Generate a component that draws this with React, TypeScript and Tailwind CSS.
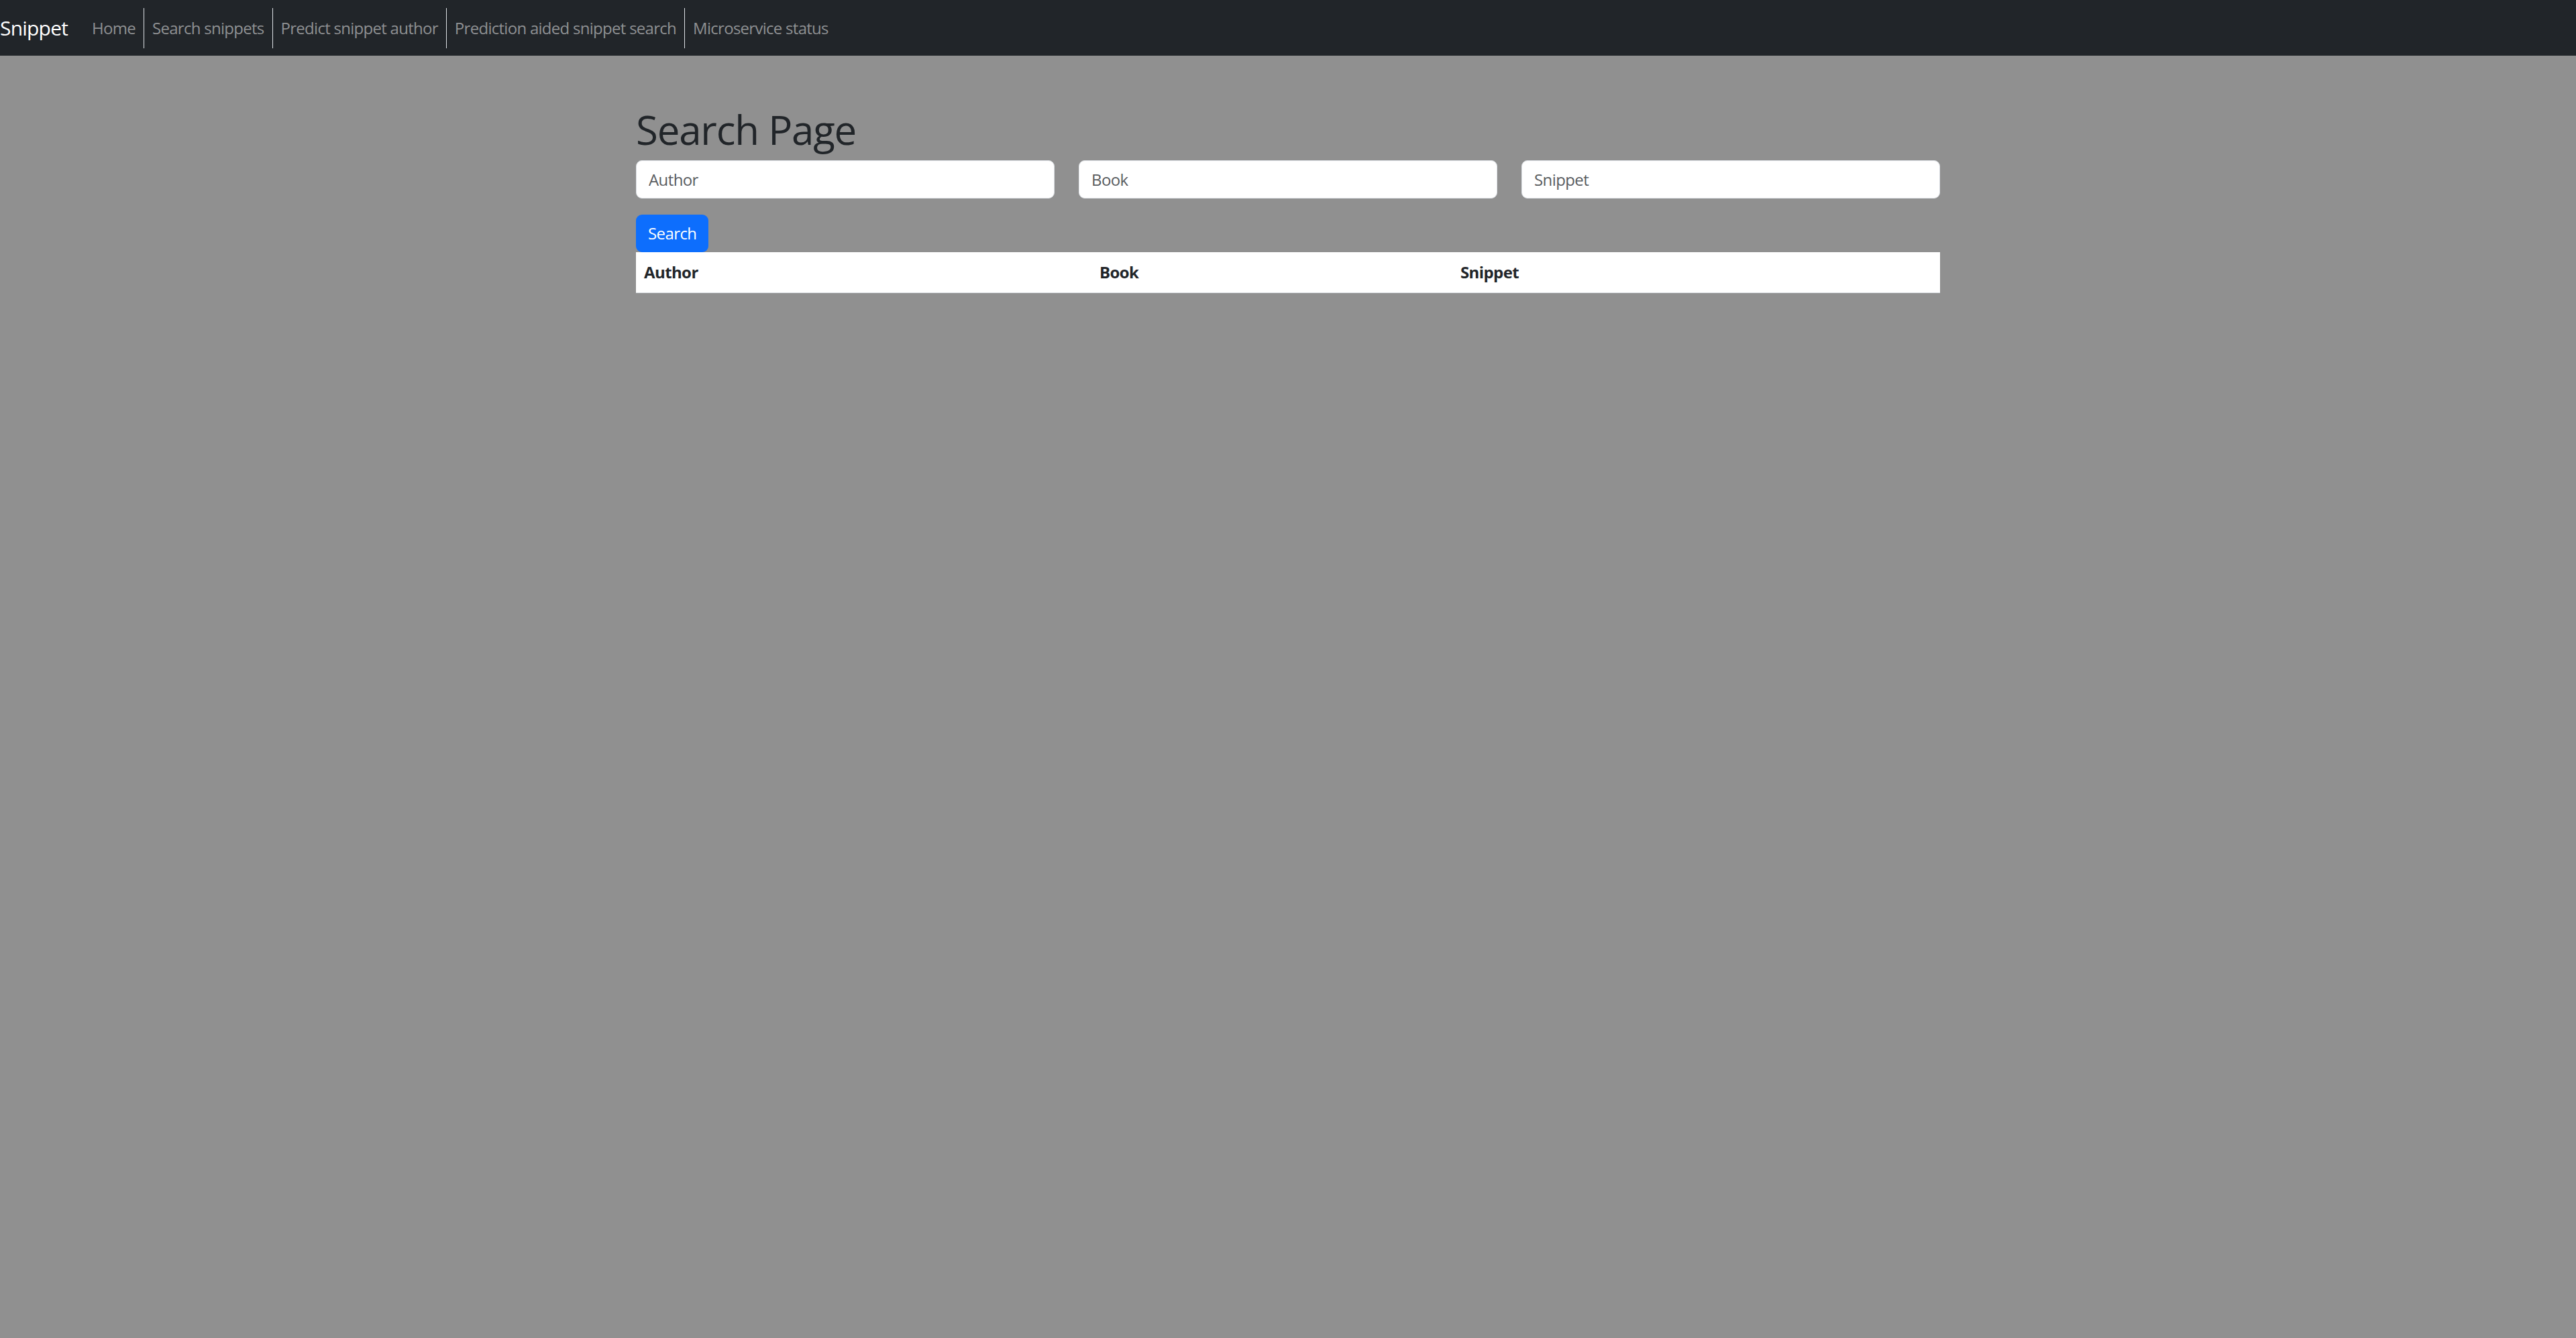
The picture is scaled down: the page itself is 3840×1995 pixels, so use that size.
import React from "react"

const links = [
  { label: "Home", divider: true },
  { label: "Search snippets", divider: true },
  { label: "Predict snippet author", divider: true },
  { label: "Prediction aided snippet search", divider: true },
  { label: "Microservice status", divider: false },
]

const Navbar = () => (
  <nav className="bg-[#212529] h-[83px] flex items-center">
    <a href="#" className="text-[30px] leading-[45px] text-white mr-6 tracking-[-0.8px]">
      Snippet
    </a>
    <div className="flex h-[60px]">
      {links.map((l) => (
        <a
          key={l.label}
          href="#"
          className={`flex items-center px-3 text-[24px] text-[#8e9092] tracking-[-0.72px] ${l.divider ? "border-r border-[#dee2e6]" : ""}`}
        >
          {l.label}
        </a>
      ))}
    </div>
  </nav>
)

export default function App() {
  return (
    <div className="min-h-screen bg-[#909090] font-['Open_Sans','Noto_Sans',sans-serif]">
      <Navbar />
      <main className="mx-auto w-[1980px] px-[18px]">
        <h1 className="mt-[74px] mb-[10px] text-[60px] leading-[72px] font-medium text-[#212529] tracking-[-1.2px]">
          Search Page
        </h1>
        {/* Filters */}
        <div className="grid grid-cols-3 gap-[36px]">
          {["Author", "Book", "Snippet"].map((p) => (
            <input
              key={p}
              placeholder={p}
              className="h-[57px] w-full rounded-[9px] border border-[#dee2e6] bg-white px-[18px] text-[24px] text-[#212529] tracking-[-0.6px] placeholder:text-[#595c5f] outline-none"
            />
          ))}
        </div>
        <button className="mt-6 h-[56px] px-[18px] rounded-[9px] bg-[#0d6efd] text-white text-[24px] tracking-[-0.6px]">
          Search
        </button>
        <table className="w-full bg-white border-collapse text-[#212529]">
          <thead>
            <tr className="border-b border-[#dee2e6]">
              <th className="w-[679px] text-left font-bold text-[24px] leading-[36px] p-3 tracking-[-0.6px]">Author</th>
              <th className="w-[538px] text-left font-bold text-[24px] leading-[36px] p-3 tracking-[-0.6px]">Book</th>
              <th className="text-left font-bold text-[24px] leading-[36px] p-3 tracking-[-0.6px]">Snippet</th>
            </tr>
          </thead>
          <tbody></tbody>
        </table>
      </main>
    </div>
  )
}
